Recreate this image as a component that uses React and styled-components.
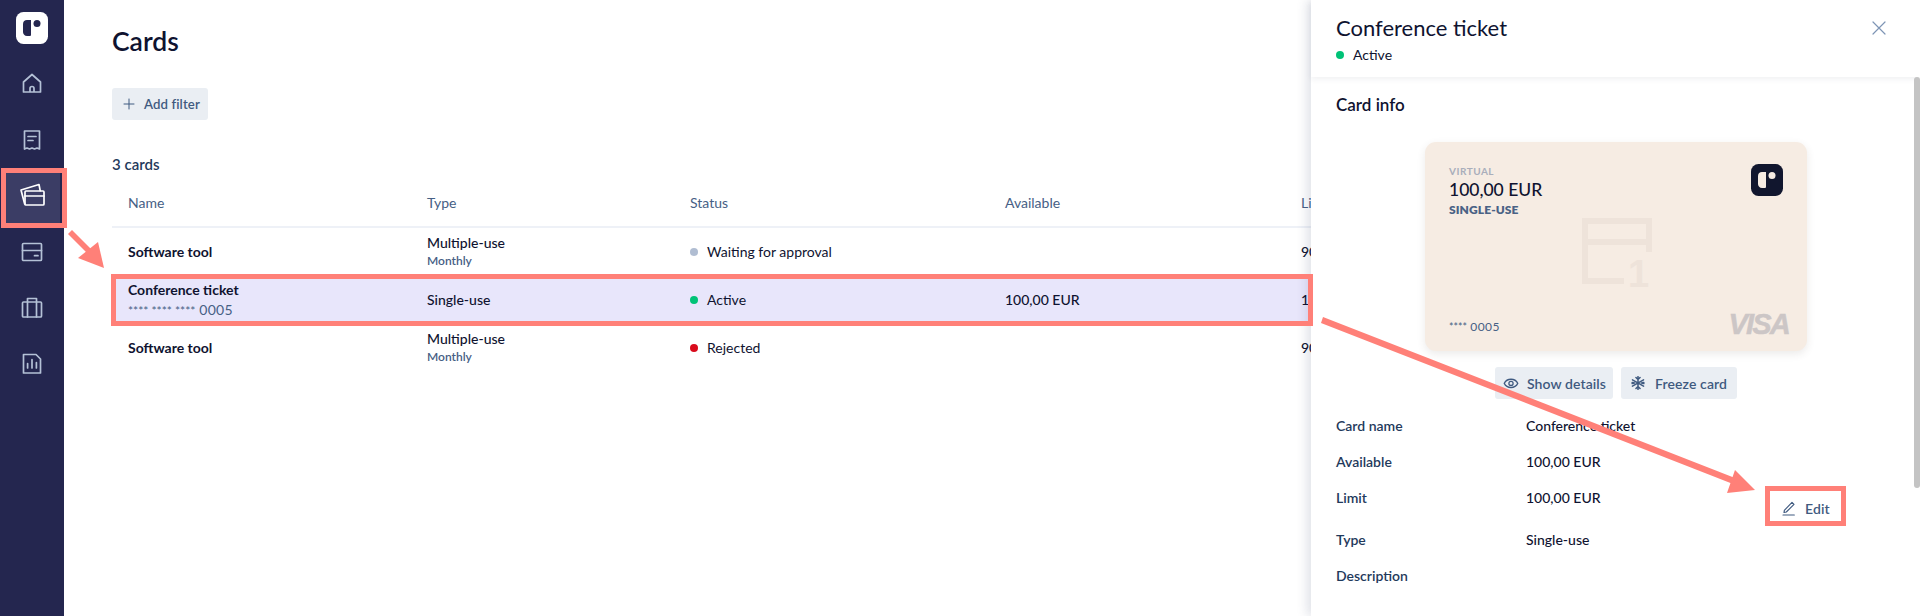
import React from "react";
import styled, { createGlobalStyle } from "styled-components";

const GlobalStyle = createGlobalStyle`
  html, body { margin: 0; padding: 0; background: #fff; }
  body { font-family: "Lato", "Liberation Sans", sans-serif; color: #0f1330; }
  * { box-sizing: border-box; }
`;

const Page = styled.div`
  position: relative;
  display: flex;
  height: 616px;
  overflow: hidden;
`;

/* sidebar */
const Sidebar = styled.nav`
  width: 64px;
  flex-shrink: 0;
  background: #24264f;
  padding-top: 12px;
  display: flex;
  flex-direction: column;
  align-items: center;
`;
const Logo = styled.div`
  width: 32px;
  height: 32px;
  margin-bottom: 12px;
  flex-shrink: 0;
`;
const NavItem = styled.div`
  width: 56px;
  height: 56px;
  display: flex;
  align-items: center;
  justify-content: center;
  color: ${(p) => (p.$active ? "#fff" : "#b4c1d6")};
  background: ${(p) => (p.$active ? "#3b3d65" : "transparent")};
`;

/* list */
const Main = styled.main`
  flex: 1;
  padding: 25px 0 0 48px;
`;
const Title = styled.h1`
  margin: 0 0 31px;
  font-size: 26.5px;
  line-height: 32px;
  font-weight: 600;
`;
const Button = styled.button`
  display: inline-flex;
  align-items: center;
  height: 32px;
  padding: 0 ${(p) => p.$pad || 8}px;
  gap: ${(p) => p.$gap || 8}px;
  border: 0;
  border-radius: 3px;
  background: ${(p) => (p.$plain ? "transparent" : "#eaeef3")};
  color: #3f5a80;
  font: 600 ${(p) => p.$size || 14}px "Lato", sans-serif;
  letter-spacing: 0.1px;
`;
const FilterButton = styled(Button)`
  padding: 0 8px 0 11px;
`;
const Count = styled.div`
  margin-top: 34px;
  font-size: 15px;
  line-height: 20px;
  font-weight: 600;
  color: #1f3a5c;
`;
const Table = styled.div`
  width: 1200px;
  font-size: 14px;
`;
const Row = styled.div`
  display: grid;
  grid-template-columns: 299px 263px 315px 296px 1fr;
  align-items: center;
  height: 48px;
  padding-left: 16px;
  white-space: nowrap;
  background: ${(p) => (p.$selected ? "#e8e6fb" : "transparent")};
`;
const HeadRow = styled(Row)`
  height: 50px;
  margin-top: 4px;
  border-bottom: 2px solid #eef1f7;
  color: #466085;
  font-size: 14px;
`;
const Name = styled.div`
  font-weight: 700;
  line-height: 20px;
`;
const Masked = styled.div`
  line-height: 20px;
  color: #466085;
  font-size: 14px;
  letter-spacing: 0.3px;
`;
const Stars = styled.span`
  font-size: ${(p) => p.$size || 12}px;
  letter-spacing: 0;
`;
const Primary = styled.div`
  line-height: 18px;
  font-weight: 500;
`;
const Sub = styled.div`
  line-height: 18px;
  font-size: 12px;
  font-weight: 600;
  color: #466085;
`;
const Status = styled.div`
  display: flex;
  align-items: center;
  gap: 9px;
  font-size: 14px;
  line-height: 16px;
  height: 18px;
`;
const Dot = styled.span`
  width: 8px;
  height: 8px;
  border-radius: 50%;
  background: ${(p) => p.$color};
`;

/* detail drawer */
const Panel = styled.aside`
  position: absolute;
  top: 0;
  right: 0;
  bottom: 0;
  width: 609px;
  background: #fff;
  box-shadow: -4px 0 10px rgba(60, 75, 110, 0.16);
`;
const PanelHead = styled.header`
  position: relative;
  height: 77px;
  padding: 14px 32px 0 25px;
  display: flex;
  justify-content: space-between;
  box-shadow: 0 2px 6px rgba(30, 40, 70, 0.07);
`;
const PanelTitle = styled.h2`
  margin: 0 0 4px;
  font-size: 22px;
  line-height: 28px;
  font-weight: 400;
`;
const Close = styled.div`
  color: #7e95b5;
  margin-top: 5px;
`;
const PanelBody = styled.div`
  padding: 16px 24px 0 25px;
`;
const Section = styled.h3`
  margin: 0 0 25px;
  font-size: 17px;
  line-height: 24px;
  font-weight: 600;
`;
const Scrollbar = styled.div`
  position: absolute;
  top: 77px;
  right: 0;
  width: 6px;
  height: 411px;
  border-radius: 3px;
  background: #c4c4c4;
`;
const CardVisual = styled.div`
  position: relative;
  width: 382px;
  height: 209px;
  margin: 0 auto 16px;
  padding: 22px 24px 16px;
  display: flex;
  flex-direction: column;
  border-radius: 11px;
  background: #f6ece3;
  box-shadow: 0 3px 8px rgba(60, 50, 40, 0.1);
`;
const Watermark = styled.svg`
  position: absolute;
  left: 157px;
  top: 76px;
`;
const CardTop = styled.div`
  display: flex;
  justify-content: space-between;
`;
const Virtual = styled.div`
  font-size: 10px;
  line-height: 14px;
  font-weight: 700;
  letter-spacing: 0.5px;
  color: #a9aebb;
`;
const Amount = styled.div`
  font-size: 17.5px;
  line-height: 24px;
  font-weight: 500;
`;
const CardType = styled.div`
  font-size: 12px;
  line-height: 16px;
  font-weight: 800;
  letter-spacing: 0.1px;
  color: #4a6285;
`;
const CardBottom = styled.div`
  margin-top: auto;
  display: flex;
  justify-content: space-between;
  align-items: flex-end;
`;
const Last4 = styled.div`
  font-size: 12px;
  line-height: 16px;
  color: #466085;
  letter-spacing: 0.4px;
`;
const Visa = styled.div`
  font-family: "Liberation Sans", sans-serif;
  font-size: 29px;
  line-height: 22px;
  font-weight: 700;
  font-style: italic;
  letter-spacing: -1.8px;
  -webkit-text-stroke: 0.5px #ccc6c6;
  color: #ccc6c6;
  margin-right: -6px;
`;
const Actions = styled.div`
  display: flex;
  justify-content: center;
  gap: 8px;
  margin-bottom: 9px;
`;
const InfoRow = styled.div`
  display: grid;
  grid-template-columns: 190px 247px auto;
  align-items: start;
  height: ${(p) => (p.$tall ? 42 : 36)}px;
  padding-top: 9px;
  font-size: 14px;
  line-height: 18px;
`;
const Label = styled.div`
  font-weight: 600;
  color: #1f3a5c;
`;
const Value = styled.div`
  font-weight: 500;
`;
const EditButton = styled(Button)`
  margin-top: 7px;
  height: 24px;
`;

/* red annotations on top of the screenshot */
const Callout = styled.div`
  position: absolute;
  left: ${(p) => p.$x}px;
  top: ${(p) => p.$y}px;
  width: ${(p) => p.$w}px;
  height: ${(p) => p.$h}px;
  border: 5px solid #ff8078;
  pointer-events: none;
`;
const Arrows = styled.svg`
  position: absolute;
  left: 0;
  top: 0;
  pointer-events: none;
`;

const Ic = ({ size = 24, box = 24, children, w = 1.7 }) => (
  <svg width={size} height={size} viewBox={`0 0 ${box} ${box}`} fill="none" stroke="currentColor" strokeWidth={w} strokeLinejoin="round" strokeLinecap="round">
    {children}
  </svg>
);

const navIcons = [
  <Ic key="home"><path d="M3.500 10 12 2.500l8.500 7.500v10h-17zM10 20v-3.500a2 2 0 0 1 4 0V20" /></Ic>,
  <Ic key="receipt"><path d="M4.500 3h15v18l-2.500-1-2.500 1-2.500-1-2.500 1-2.500-1-2.500 1zM8 8.500h8M8 12.500h5" /></Ic>,
  <Ic key="cards" size={26} box={26}><path d="M5.700 21 2 7 20 1.500l1.200 6.200" /><rect x="6" y="8" width="19" height="14" rx="1" /><path d="M6 13h19" /></Ic>,
  <Ic key="card"><rect x="2.500" y="3.500" width="19" height="17" rx="1" /><path d="M2.500 10.500h19M14.500 15.700h3.500" /></Ic>,
  <Ic key="case"><rect x="2.500" y="6" width="19" height="15" rx="1" /><path d="M7.500 6V2.500h9V6M7.500 6v15M16.500 6v15" /></Ic>,
  <Ic key="report"><path d="M3.500 2.500h12.500l4.500 4.500v14h-17zM7.600 16v-4.500M12 16V7.500M16.400 16v-5.500" /></Ic>,
];

const LogoMark = ({ bg, color }) => (
  <svg width="32" height="32" viewBox="0 0 32 32">
    <rect width="32" height="32" rx="7.500" fill={bg} />
    <path d="M7 12c0-2.500 1.700-4 4-4h4v14.500c0 1-.5 1.500-1.500 1.500H11c-2.300 0-4-1.700-4-4z" fill={color} />
    <circle cx="21" cy="11.500" r="3.500" fill={color} />
  </svg>
);

const rows = [
  { name: "Software tool", type: "Multiple-use", sub: "Monthly", dot: "#b0bdd2", status: "Waiting for approval", limit: "90,00 EUR" },
  { name: "Conference ticket", last4: "0005", type: "Single-use", dot: "#00c277", status: "Active", available: "100,00 EUR", limit: "100,00 EUR", selected: true },
  { name: "Software tool", type: "Multiple-use", sub: "Monthly", dot: "#d90b1c", status: "Rejected", limit: "90,00 EUR" },
];

export default function App() {
  return (
    <Page>
      <GlobalStyle />
      <Sidebar>
        <Logo><LogoMark bg="#fff" color="#24264f" /></Logo>
        {navIcons.map((icon, i) => (
          <NavItem key={i} $active={i === 2}>{icon}</NavItem>
        ))}
      </Sidebar>

      <Main>
        <Title>Cards</Title>
        <FilterButton $gap={9} $size={13.2}>
          <Ic size={12} w={2}><path d="M12 2v20M2 12h20" /></Ic>
          Add filter
        </FilterButton>
        <Count>3 cards</Count>
        <Table>
          <HeadRow>
            <div>Name</div>
            <div>Type</div>
            <div>Status</div>
            <div>Available</div>
            <div>Limit</div>
          </HeadRow>
          {rows.map((r, i) => (
            <Row key={i} $selected={r.selected}>
              <div>
                <Name>{r.name}</Name>
                {r.last4 && <Masked><Stars>**** **** ****</Stars> {r.last4}</Masked>}
              </div>
              <div>
                <Primary>{r.type}</Primary>
                {r.sub && <Sub>{r.sub}</Sub>}
              </div>
              <Status><Dot $color={r.dot} />{r.status}</Status>
              <Primary>{r.available}</Primary>
              <Primary>{r.limit}</Primary>
            </Row>
          ))}
        </Table>
      </Main>

      <Panel>
        <PanelHead>
          <div>
            <PanelTitle>Conference ticket</PanelTitle>
            <Status><Dot $color="#00c277" />Active</Status>
          </div>
          <Close>
            <Ic size={18} w={1.6}><path d="M4 4l16 16M20 4 4 20" /></Ic>
          </Close>
        </PanelHead>
        <Scrollbar />
        <PanelBody>
          <Section>Card info</Section>
          <CardVisual>
            <Watermark width="72" height="74" viewBox="0 0 72 74" fill="none" stroke="#eee3da" strokeWidth="6">
              <path d="M67 34V3H3v60h39M3 24h64" />
              <text x="46" y="69" fontFamily="Liberation Sans, sans-serif" fontSize="38" fontWeight="700" fill="#eee3da" stroke="none">1</text>
            </Watermark>
            <CardTop>
              <div>
                <Virtual>VIRTUAL</Virtual>
                <Amount>100,00 EUR</Amount>
                <CardType>SINGLE-USE</CardType>
              </div>
              <Logo><LogoMark bg="#11162e" color="#f6ece3" /></Logo>
            </CardTop>
            <CardBottom>
              <Last4><Stars $size={10.5}>****</Stars> 0005</Last4>
              <Visa>VISA</Visa>
            </CardBottom>
          </CardVisual>
          <Actions>
            <Button $gap={7} $pad={7}>
              <Ic size={18}><path d="M3 12.500c1.800-3.600 5-5.500 9-5.500s7.200 1.900 9 5.500c-1.800 3.600-5 5.500-9 5.500s-7.200-1.900-9-5.500z" /><circle cx="12" cy="12.500" r="2.800" /></Ic>
              Show details
            </Button>
            <Button $gap={10} $pad={10}>
              <Ic size={14} w={2.6}><path d="M12 1v22M2.500 6.500l19 11M21.500 6.500l-19 11M8.500 2.500 12 6l3.500-3.500M8.500 21.500 12 18l3.500 3.500M2 11l4 1-4 1M22 11l-4 1 4 1" /></Ic>
              Freeze card
            </Button>
          </Actions>
          <InfoRow><Label>Card name</Label><Value>Conference ticket</Value></InfoRow>
          <InfoRow><Label>Available</Label><Value>100,00 EUR</Value></InfoRow>
          <InfoRow $tall>
            <Label>Limit</Label>
            <Value>100,00 EUR</Value>
            <EditButton as="div" $plain $gap={8}>
              <Ic size={16}><path d="M5 15.500 16.500 3.500l3 3L8 18l-3.500.800zM3 22.500h17" /></Ic>
              Edit
            </EditButton>
          </InfoRow>
          <InfoRow><Label>Type</Label><Value>Single-use</Value></InfoRow>
          <InfoRow><Label>Description</Label></InfoRow>
        </PanelBody>
      </Panel>

      <Callout $x={1} $y={168} $w={66} $h={60} />
      <Callout $x={111} $y={274} $w={1202} $h={52} />
      <Callout $x={1765} $y={486} $w={81} $h={40} />
      <Arrows width="1920" height="616" fill="#ff8078" stroke="none">
        <path d="M72 230 92 250 88 254 68 234z" />
        <path d="M104 268 78 258 98 242z" />
        <path d="M1323 317 1735 478 1733 484 1321 323z" />
        <path d="M1755 490 1735 470 1727 493z" />
      </Arrows>
    </Page>
  );
}
